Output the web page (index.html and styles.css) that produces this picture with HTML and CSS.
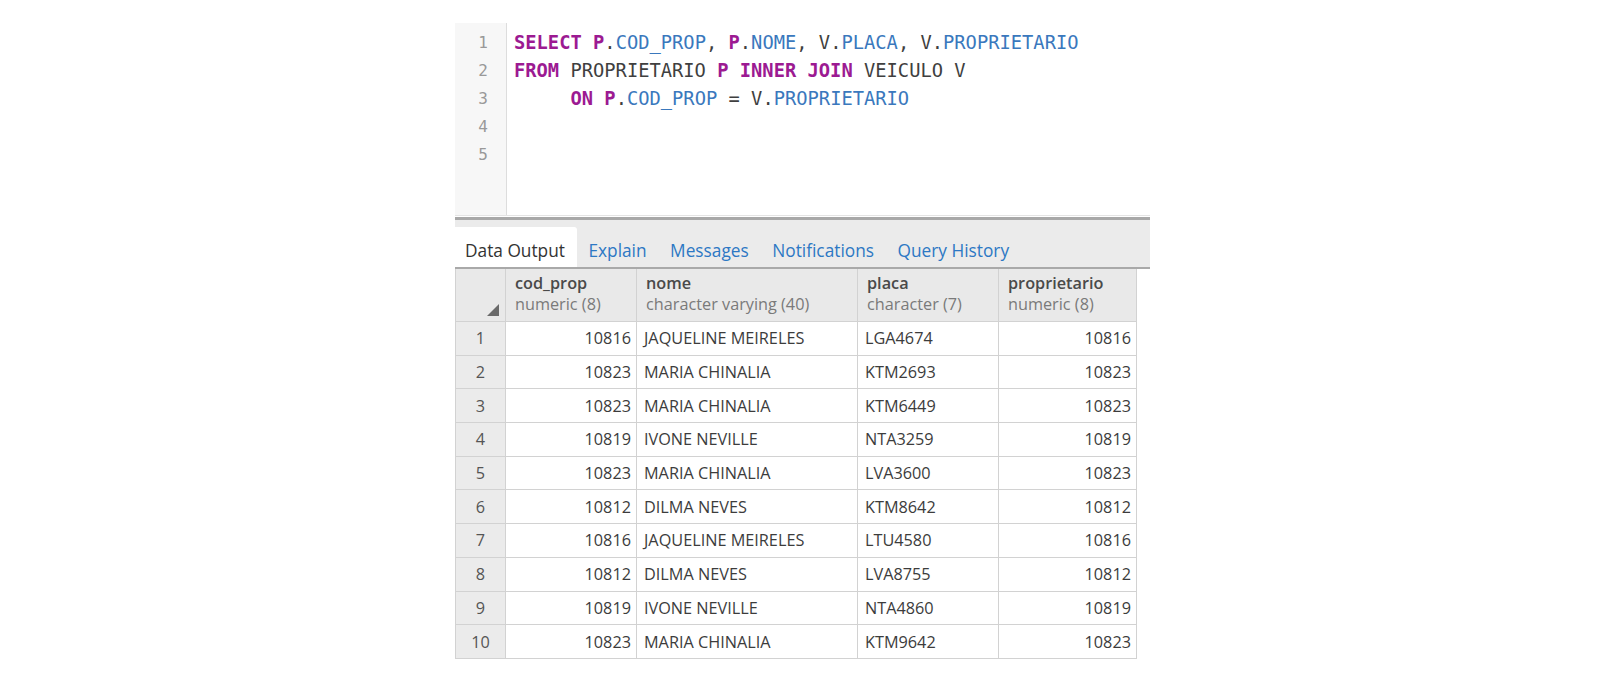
FILE: index.html
```html
<!DOCTYPE html>
<html>
<head>
<meta charset="utf-8">
<link rel="stylesheet" href="styles.css">
</head>
<body>
<div class="panel">
  <div class="editor">
    <div class="gutter">
      <div class="ln">1</div><div class="ln">2</div><div class="ln">3</div><div class="ln">4</div><div class="ln">5</div>
    </div>
    <div class="code">
      <div class="line"><span class="kw">SELECT</span> <span class="kw">P</span>.<span class="col">COD_PROP</span>, <span class="kw">P</span>.<span class="col">NOME</span>, V.<span class="col">PLACA</span>, V.<span class="col">PROPRIETARIO</span></div>
      <div class="line"><span class="kw">FROM</span> PROPRIETARIO <span class="kw">P</span> <span class="kw">INNER</span> <span class="kw">JOIN</span> VEICULO V</div>
      <div class="line">     <span class="kw">ON</span> <span class="kw">P</span>.<span class="col">COD_PROP</span> = V.<span class="col">PROPRIETARIO</span></div>
      <div class="line"> </div>
      <div class="line"> </div>
    </div>
  </div>
  <div class="splitter"></div>
  <div class="tabbar">
    <div class="tab active">Data Output</div>
    <div class="tab">Explain</div>
    <div class="tab">Messages</div>
    <div class="tab">Notifications</div>
    <div class="tab">Query History</div>
  </div>
  <table class="grid">
    <colgroup>
      <col class="c0"><col class="c1"><col class="c2"><col class="c3"><col class="c4">
    </colgroup>
    <thead>
      <tr>
        <th class="corner"><span class="tri"></span></th>
        <th><div class="hn">cod_prop</div><div class="ht">numeric (8)</div></th>
        <th><div class="hn">nome</div><div class="ht">character varying (40)</div></th>
        <th><div class="hn">placa</div><div class="ht">character (7)</div></th>
        <th><div class="hn">proprietario</div><div class="ht">numeric (8)</div></th>
      </tr>
    </thead>
    <tbody>
      <tr><td class="rn">1</td><td class="num">10816</td><td>JAQUELINE MEIRELES</td><td>LGA4674</td><td class="num">10816</td></tr>
      <tr><td class="rn">2</td><td class="num">10823</td><td>MARIA CHINALIA</td><td>KTM2693</td><td class="num">10823</td></tr>
      <tr><td class="rn">3</td><td class="num">10823</td><td>MARIA CHINALIA</td><td>KTM6449</td><td class="num">10823</td></tr>
      <tr><td class="rn">4</td><td class="num">10819</td><td>IVONE NEVILLE</td><td>NTA3259</td><td class="num">10819</td></tr>
      <tr><td class="rn">5</td><td class="num">10823</td><td>MARIA CHINALIA</td><td>LVA3600</td><td class="num">10823</td></tr>
      <tr><td class="rn">6</td><td class="num">10812</td><td>DILMA NEVES</td><td>KTM8642</td><td class="num">10812</td></tr>
      <tr><td class="rn">7</td><td class="num">10816</td><td>JAQUELINE MEIRELES</td><td>LTU4580</td><td class="num">10816</td></tr>
      <tr><td class="rn">8</td><td class="num">10812</td><td>DILMA NEVES</td><td>LVA8755</td><td class="num">10812</td></tr>
      <tr><td class="rn">9</td><td class="num">10819</td><td>IVONE NEVILLE</td><td>NTA4860</td><td class="num">10819</td></tr>
      <tr><td class="rn">10</td><td class="num">10823</td><td>MARIA CHINALIA</td><td>KTM9642</td><td class="num">10823</td></tr>
    </tbody>
  </table>
</div>
</body>
</html>
```
FILE: styles.css
```css
html, body {
  margin: 0;
  padding: 0;
  background: #ffffff;
}
.panel {
  margin-left: 455px;
  margin-top: 23px;
  width: 695px;
  font-family: "Open Sans", "Liberation Sans", sans-serif;
}
.editor {
  display: flex;
  height: 192px;
  background: #fff;
  border-bottom: 1px solid #e4e4e4;
}
.gutter {
  width: 52px;
  background: #f7f7f7;
  border-right: 1px solid #dddddd;
  padding-top: 6px;
  box-sizing: border-box;
}
.ln {
  height: 28px;
  line-height: 28px;
  text-align: right;
  padding-right: 18px;
  font-family: "DejaVu Sans Mono", monospace;
  font-size: 16px;
  color: #999999;
}
.code {
  flex: 1;
  padding-top: 6px;
  padding-left: 7px;
  font-family: "DejaVu Sans Mono", monospace;
  font-size: 18.75px;
  color: #3f3f3f;
}
.line {
  height: 28px;
  line-height: 28px;
  white-space: pre;
}
.kw {
  color: #9c1a92;
  font-weight: bold;
}
.col {
  color: #3a78bd;
}
.splitter {
  height: 3px;
  background: #a8a8a8;
  margin-top: 1px;
}
.tabbar {
  display: flex;
  align-items: flex-end;
  height: 47px;
  background: #ebebeb;
  border-bottom: 2px solid #a9a9a9;
}
.tab {
  height: 40px;
  box-sizing: border-box;
  padding: 6px 12.5px 0 10px;
  line-height: 36px;
  font-size: 17.3px;
  color: #2d78c4;
}
.tab + .tab {
  padding-left: 11px;
}
.tab.active {
  background: #ffffff;
  color: #333333;
  border-top-right-radius: 3px;
}
.grid {
  border-collapse: collapse;
  table-layout: fixed;
  width: 681px;
  font-size: 16.25px;
  color: #3c3c3c;
}
.c0 { width: 50px; }
.c1 { width: 131px; }
.c2 { width: 221px; }
.c3 { width: 141px; }
.c4 { width: 138px; }
.grid th {
  background: #e9e9e9;
  border: 1px solid #d2d2d2;
  border-top: none;
  text-align: left;
  vertical-align: top;
  padding: 4px 9px 0 9px;
  height: 48px;
  font-weight: normal;
  position: relative;
}
.grid th.corner {
  padding: 0;
}
.tri {
  position: absolute;
  right: 6px;
  bottom: 5px;
  width: 0;
  height: 0;
  border-left: 12px solid transparent;
  border-bottom: 12px solid #6a6a6a;
}
.hn {
  font-weight: 600;
  color: #4a4a4a;
  line-height: 21px;
}
.ht {
  color: #7a7a7a;
  line-height: 21px;
}
.grid td {
  height: 32.7px;
  padding: 0 7px;
  border: 1px solid #d2d2d2;
  background: #ffffff;
  white-space: nowrap;
  overflow: hidden;
}
.grid td.rn {
  background: #ebebeb;
  text-align: center;
  color: #555555;
}
.grid td.num {
  text-align: right;
  padding-right: 5px;
}
```
